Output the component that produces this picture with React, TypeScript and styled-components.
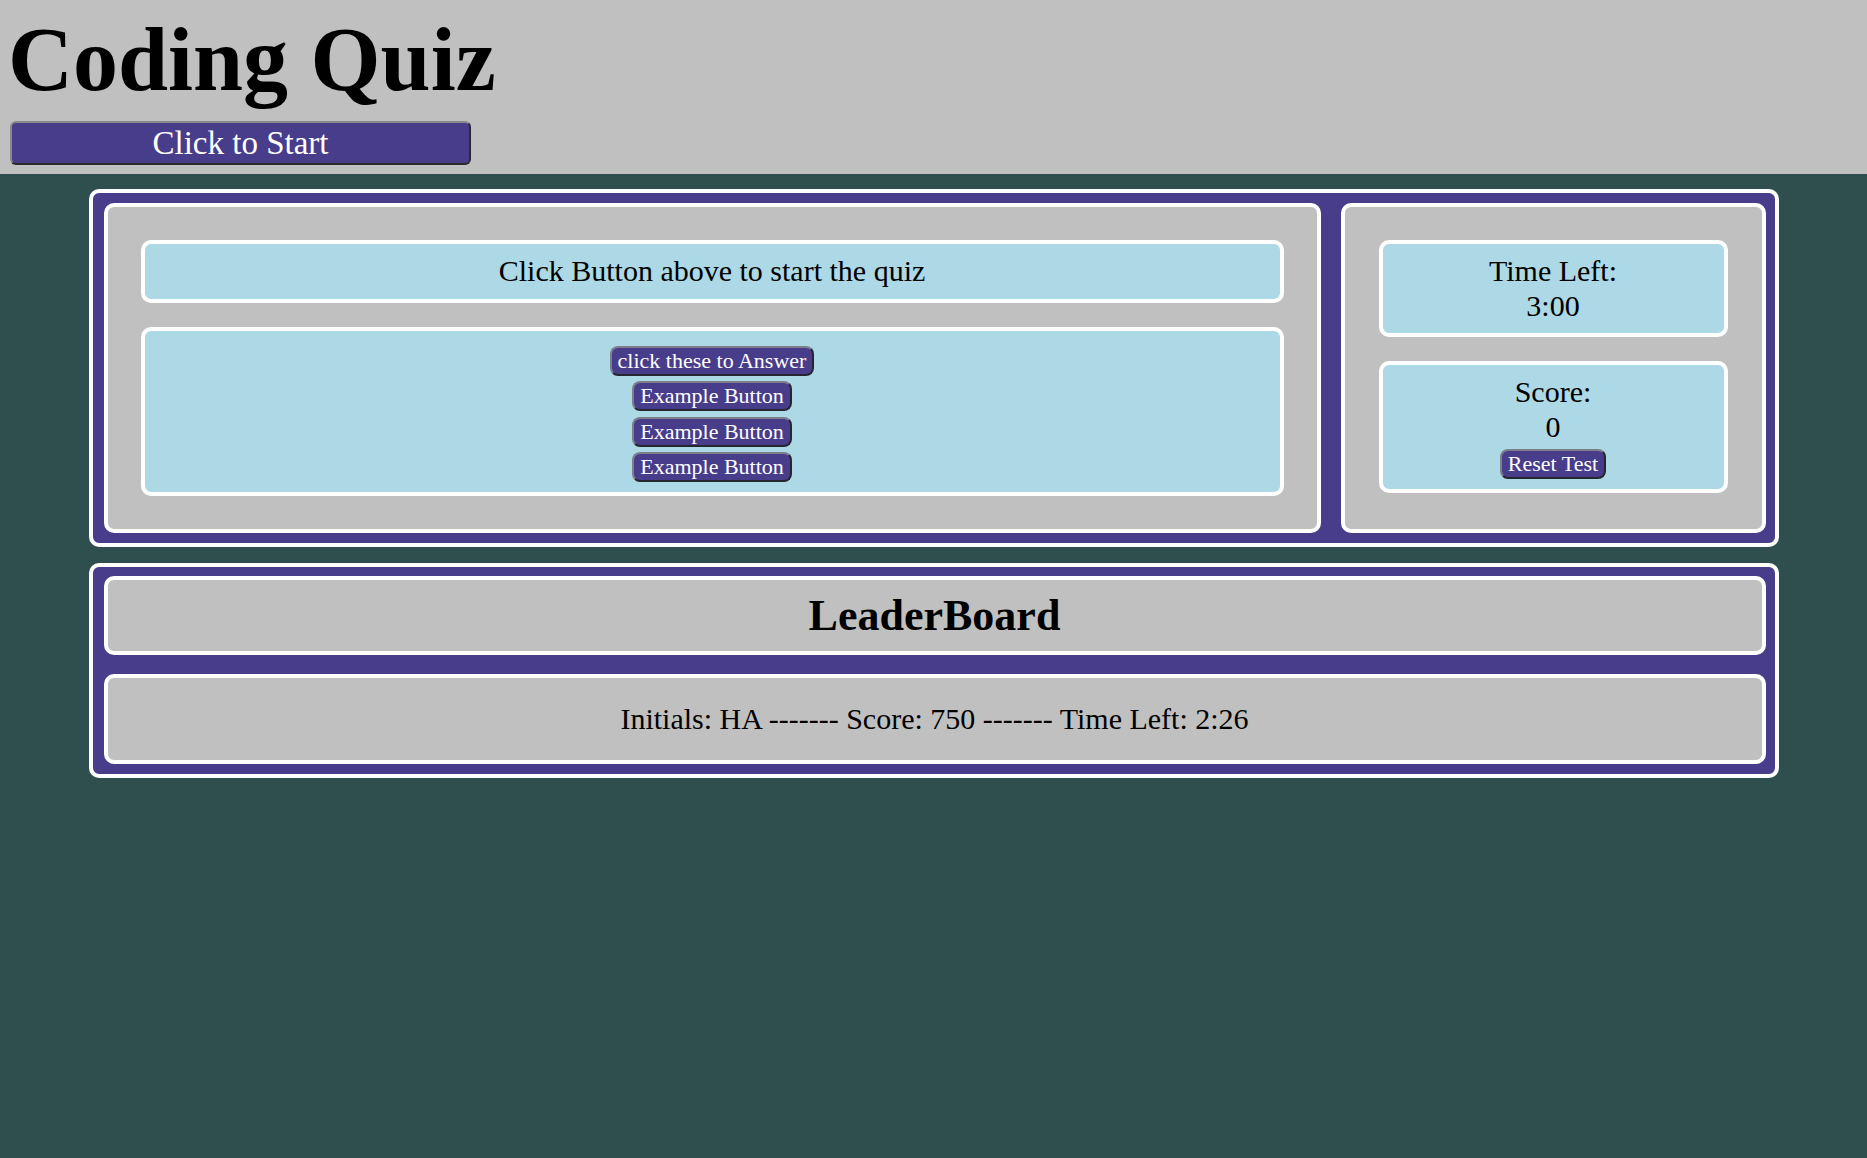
import React from "react";
import styled, { createGlobalStyle } from "styled-components";

const GlobalStyle = createGlobalStyle`
  html, body {
    margin: 0;
    padding: 0;
    background: #2f4f4f;
    font-family: "Liberation Serif", "Times New Roman", serif;
    color: #000;
  }
  body {
    min-height: 1158px;
  }
`;

const Header = styled.header`
  background: #c0c0c0;
  padding: 8px 8px 9px 8px;
`;

const Title = styled.h1`
  margin: 0;
  font-size: 90px;
  font-weight: bold;
  line-height: 103px;
`;

const StartButton = styled.button`
  display: block;
  margin: 10px 0 0 2px;
  width: 461px;
  height: 44px;
  background: #483d8b;
  color: #fff;
  font-family: "Liberation Serif", "Times New Roman", serif;
  font-size: 33px;
  line-height: 1;
  border: 2px solid;
  border-color: #8a8a8a #2a2a2a #2a2a2a #8a8a8a;
  border-radius: 6px;
  padding: 0;
  cursor: pointer;
`;

const Frame = styled.section<{ $top: number }>`
  box-sizing: border-box;
  width: 1690px;
  margin: ${(p) => p.$top}px auto 0 auto;
  background: #483d8b;
  border: 4px solid #fff;
  border-radius: 10px;
`;

const QuizFrame = styled(Frame)`
  display: flex;
  gap: 20px;
  padding: 10px 9px 10px 11px;
`;

const BoardFrame = styled(Frame)`
  display: flex;
  flex-direction: column;
  gap: 19px;
  padding: 9px 9px 10px 11px;
`;

const GrayPanel = styled.div<{ $px: number }>`
  box-sizing: border-box;
  background: #c0c0c0;
  border: 4px solid #fff;
  border-radius: 10px;
  padding: 33px ${(p) => p.$px}px;
  display: flex;
  flex-direction: column;
  gap: 24px;
`;

const QuestionPanel = styled(GrayPanel)`
  flex: 1;
`;

const StatsPanel = styled(GrayPanel)`
  width: 425px;
`;

const BlueBox = styled.div`
  box-sizing: border-box;
  background: #add8e6;
  border: 4px solid #fff;
  border-radius: 10px;
  padding: 10px;
  font-size: 30px;
  line-height: 34.5px;
  text-align: center;
  display: flex;
  flex-direction: column;
  align-items: center;
`;

const AnswerBox = styled(BlueBox)`
  padding: 15px 10px 10px 10px;
  gap: 5.67px;
`;

const SmallButton = styled.button<{ $mt?: number }>`
  box-sizing: border-box;
  height: 30px;
  margin-top: ${(p) => p.$mt ?? 0}px;
  padding: 0 6px;
  background: #483d8b;
  color: #fff;
  font-family: "Liberation Serif", "Times New Roman", serif;
  font-size: 22px;
  line-height: 26px;
  border: 2px solid;
  border-color: #7d7d8c #262630 #262630 #7d7d8c;
  border-radius: 8px;
  cursor: pointer;
  white-space: nowrap;
`;

const BoardRow = styled.div<{ $bold?: boolean }>`
  box-sizing: border-box;
  background: #c0c0c0;
  border: 4px solid #fff;
  border-radius: 10px;
  text-align: center;
  font-size: ${(p) => (p.$bold ? 44 : 30)}px;
  font-weight: ${(p) => (p.$bold ? "bold" : "normal")};
  line-height: ${(p) => (p.$bold ? "51px" : "34.5px")};
  padding: ${(p) => (p.$bold ? "10px 0" : "23.75px 0")};
`;

export default function App() {
  return (
    <>
      <GlobalStyle />
      <Header>
        <Title>Coding Quiz</Title>
        <StartButton>Click to Start</StartButton>
      </Header>
      <QuizFrame $top={15}>
        <QuestionPanel $px={33}>
          <BlueBox>Click Button above to start the quiz</BlueBox>
          <AnswerBox>
            <SmallButton>click these to Answer</SmallButton>
            <SmallButton>Example Button</SmallButton>
            <SmallButton>Example Button</SmallButton>
            <SmallButton>Example Button</SmallButton>
          </AnswerBox>
        </QuestionPanel>
        <StatsPanel $px={34}>
          <BlueBox>
            <div>Time Left:</div>
            <div>3:00</div>
          </BlueBox>
          <BlueBox>
            <div>Score:</div>
            <div>0</div>
            <SmallButton $mt={4.5}>Reset Test</SmallButton>
          </BlueBox>
        </StatsPanel>
      </QuizFrame>
      <BoardFrame $top={16}>
        <BoardRow $bold>LeaderBoard</BoardRow>
        <BoardRow>Initials: HA ------- Score: 750 ------- Time Left: 2:26</BoardRow>
      </BoardFrame>
    </>
  );
}
